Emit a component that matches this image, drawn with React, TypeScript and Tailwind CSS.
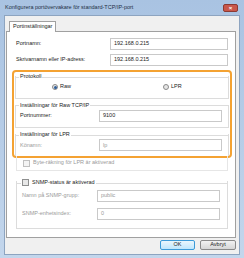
import React from "react";

const Input = ({ value, disabled, w = "w-[123px]" }: { value: string; disabled?: boolean; w?: string }) => (
  <div className={`${w} h-[12px] border border-[#c9c9c9] bg-white flex items-center px-[3px] text-[5.5px] ${disabled ? "text-[#9a9a9a]" : "text-[#222]"}`}>
    {value}
  </div>
);

const Radio = ({ checked, label, disabled }: { checked?: boolean; label: string; disabled?: boolean }) => (
  <div className="flex items-center gap-[2px]">
    <div className="w-[6px] h-[6px] rounded-full border border-[#8a8a8a] bg-[#e6e6e6] flex items-center justify-center">
      {checked && <div className="w-[3px] h-[3px] rounded-full bg-[#2f5f9a]" />}
    </div>
    <span className={disabled ? "text-[#8a8a8a]" : "text-[#222]"}>{label}</span>
  </div>
);

const Check = ({ label, disabled }: { label: string; disabled?: boolean }) => (
  <div className="flex items-center gap-[3px]">
    <div className={`w-[7px] h-[7px] border ${disabled ? "border-[#c0c0c0] bg-[#f4f4f4]" : "border-[#8e8f8f] bg-[#e8e8e8]"}`} />
    <span className={disabled ? "text-[#9a9a9a]" : "text-[#222]"}>{label}</span>
  </div>
);

export default function App() {
  return (
    <div className="w-[244px] h-[258px] bg-gradient-to-b from-[#a9c3e2] to-[#c3d6ec] flex flex-col pl-[4px] pr-[4px] pb-[3px] font-['Liberation_Sans',Arial,sans-serif] text-[5.5px] text-[#222] leading-none">
      {/* title bar */}
      <div className="h-[15px] flex items-center justify-between pl-[1px] pr-[2px]">
        <span className="text-[5.5px] text-[#1e2f45]">Konfigurera portövervakare för standard-TCP/IP-port</span>
        <div className="w-[15px] h-[8px] rounded-[2px] bg-[#c9574a] border border-[#8c3a33] flex items-center justify-center text-white text-[6px] font-bold">×</div>
      </div>
      {/* client */}
      <div className="flex-1 bg-[#f0f0f0] border border-[#8da4c0] flex flex-col pl-[1px] pr-[3px] pt-[4px]">
        {/* tab */}
        <div className="flex pl-[3px]">
          <div className="h-[11px] px-[3px] border border-b-0 border-[#a0a0a0] bg-white flex items-center relative top-[1px]">
            Portinställningar
          </div>
        </div>
        {/* panel */}
        <div className="h-[207px] bg-white border border-[#a0a0a0] flex flex-col pl-[9px] pr-[7px] pt-[6px]">
          <div className="flex items-center justify-between h-[12px]">
            <span>Portnamn:</span>
            <Input value="192.168.0.215" w="w-[118px]" />
          </div>
          <div className="flex items-center justify-between h-[12px] mt-[4px]">
            <span>Skrivarnamn eller IP-adress:</span>
            <Input value="192.168.0.215" w="w-[118px]" />
          </div>
          {/* orange highlight */}
          <div className="mt-[4px] -ml-[4px] -mr-[4px] h-[88px] border-[2px] border-[#f4a232] rounded-[4px] flex flex-col px-[1px] pt-[4px]">
            <div className="border border-[#dcdcdc] border-t-0 h-[23px] relative">
              <div className="absolute -top-[1px] left-0 right-0 flex items-center">
                <div className="w-[3px] border-t border-[#dcdcdc]" />
                <span className="px-[1px] -mt-[1px]">Protokoll</span>
                <div className="flex-1 border-t border-[#dcdcdc]" />
              </div>
              <div className="flex items-center pt-[8px] pl-[36px]">
                <Radio checked label="Raw" />
                <div className="ml-[92px]"><Radio label="LPR" /></div>
              </div>
            </div>
            <div className="border border-[#dcdcdc] border-t-0 h-[24px] mt-[6px] relative">
              <div className="absolute -top-[1px] left-0 right-0 flex items-center">
                <div className="w-[3px] border-t border-[#dcdcdc]" />
                <span className="px-[1px] -mt-[1px]">Inställningar för Raw TCP/IP</span>
                <div className="flex-1 border-t border-[#dcdcdc]" />
              </div>
              <div className="flex items-center justify-between pt-[5px] pl-[4px] pr-[6px]">
                <span>Portnummer:</span>
                <Input value="9100" />
              </div>
            </div>
            <div className="border-[#dcdcdc] border-l border-r h-[22px] mt-[6px] relative">
              <div className="absolute -top-[1px] left-0 right-0 flex items-center">
                <div className="w-[3px] border-t border-[#dcdcdc]" />
                <span className="px-[1px] -mt-[1px]">Inställningar för LPR</span>
                <div className="flex-1 border-t border-[#dcdcdc]" />
              </div>
              <div className="flex items-center justify-between pt-[5px] pl-[4px] pr-[6px]">
                <span className="text-[#9a9a9a]">Könamn:</span>
                <Input value="lp" disabled />
              </div>
            </div>
          </div>
          <div className="-mt-[2px] border border-t-0 border-[#e6e6e6] h-[15px] flex items-center pl-[6px] mx-0">
            <Check label="Byte-räkning för LPR är aktiverad" disabled />
          </div>
          {/* SNMP */}
          <div className="mt-[10px] border border-t-0 border-[#dcdcdc] h-[48px] relative">
            <div className="absolute -top-[1px] left-0 right-0 flex items-center">
              <div className="w-[4px] border-t border-[#dcdcdc]" />
              <div className="px-[1px] -mt-[1px]"><Check label="SNMP-status är aktiverad" /></div>
              <div className="flex-1 border-t border-[#dcdcdc]" />
            </div>
            <div className="flex items-center justify-between pt-[9px] pl-[5px] pr-[7px]">
              <span className="text-[#9a9a9a]">Namn på SNMP-grupp:</span>
              <Input value="public" disabled />
            </div>
            <div className="flex items-center justify-between pt-[6px] pl-[5px] pr-[7px]">
              <span className="text-[#9a9a9a]">SNMP-enhetsindex:</span>
              <Input value="0" disabled />
            </div>
          </div>
        </div>
        {/* buttons */}
        <div className="flex justify-end gap-[5px] pt-[2px] pr-[0px]">
          <div className="w-[35px] h-[10px] rounded-[2px] border border-[#3c9ad8] bg-gradient-to-b from-[#eaf6fd] to-[#bee6fd] flex items-center justify-center">OK</div>
          <div className="w-[36px] h-[10px] rounded-[2px] border border-[#8a8a8a] bg-gradient-to-b from-[#f2f2f2] to-[#d6d6d6] flex items-center justify-center">Avbryt</div>
        </div>
      </div>
    </div>
  );
}
